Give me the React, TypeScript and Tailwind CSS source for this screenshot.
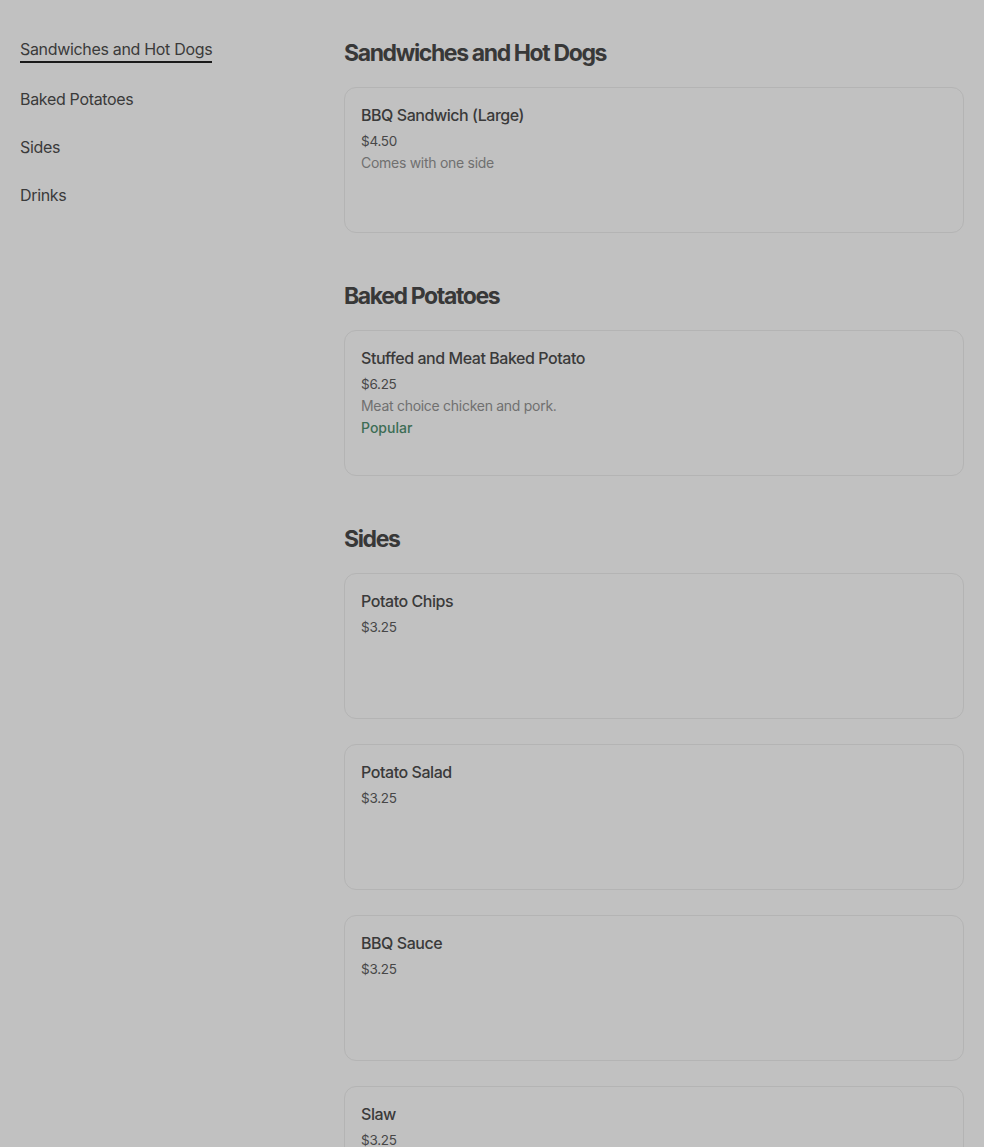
import React from "react";

type Item = { name: string; price: string; description?: string; popular?: boolean };

const SECTIONS: { title: string; items: Item[] }[] = [
  {
    title: "Sandwiches and Hot Dogs",
    items: [{ name: "BBQ Sandwich (Large)", price: "$4.50", description: "Comes with one side" }],
  },
  {
    title: "Baked Potatoes",
    items: [
      {
        name: "Stuffed and Meat Baked Potato",
        price: "$6.25",
        description: "Meat choice chicken and pork.",
        popular: true,
      },
    ],
  },
  {
    title: "Sides",
    items: [
      { name: "Potato Chips", price: "$3.25" },
      { name: "Potato Salad", price: "$3.25" },
      { name: "BBQ Sauce", price: "$3.25" },
      { name: "Slaw", price: "$3.25" },
    ],
  },
  { title: "Drinks", items: [] },
];

function MenuCard({ item }: { item: Item }) {
  return (
    <div className="h-[146px] rounded-xl border border-[#b4b4b4] px-4 pt-4">
      <p className="text-base leading-[22px] font-medium tracking-[-0.028em] text-[#3a3a3a]">
        {item.name}
      </p>
      <p className="mt-1 text-[13.5px] leading-[22px] tracking-[-0.02em] text-[#474747]">
        {item.price}
      </p>
      {item.description && (
        <p className="text-sm leading-[22px] tracking-[-0.02em] text-[#707070]">
          {item.description}
        </p>
      )}
      {item.popular && (
        <p className="text-sm leading-[22px] font-medium text-[#3d6d55]">Popular</p>
      )}
    </div>
  );
}

export default function App() {
  return (
    <div
      className="min-h-screen bg-[#c1c1c1] px-5 pt-[35px]"
      style={{ fontFamily: "Inter, 'Noto Sans', sans-serif" }}
    >
      <div className="flex gap-5">
        <nav className="w-[304px] shrink-0 pt-[2px]">
          <ul className="flex flex-col items-start gap-6">
            {SECTIONS.map((s, i) => (
              <li
                key={s.title}
                className={`text-base leading-6 tracking-[-0.02em] text-[#3a3a3a] ${
                  i === 0 ? "border-b-2 border-[#1a1a1a]" : ""
                }`}
              >
                {s.title}
              </li>
            ))}
          </ul>
        </nav>

        <main className="flex-1 min-w-0">
          {SECTIONS.map((s) => (
            <section key={s.title} className="mb-[45px]">
              <h2 className="mb-4 pt-[1px] text-[23px] leading-[35px] font-bold tracking-[-0.06em] text-[#383838]">
                {s.title}
              </h2>
              <div className="flex flex-col gap-[25px]">
                {s.items.map((item) => (
                  <MenuCard key={item.name} item={item} />
                ))}
              </div>
            </section>
          ))}
        </main>
      </div>
    </div>
  );
}
